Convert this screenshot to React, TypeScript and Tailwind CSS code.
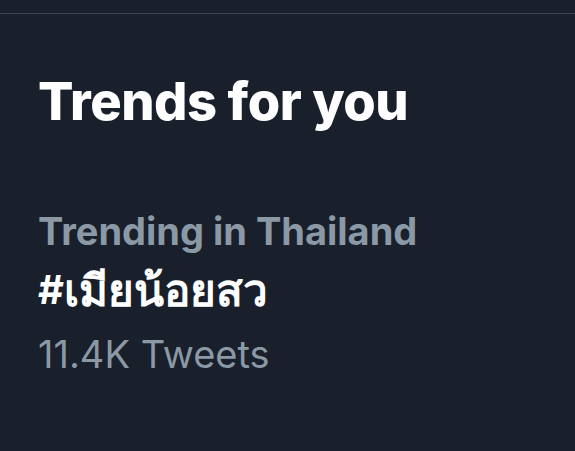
export default function App() {
  return (
    <div className="w-[575px] h-[451px] bg-[#19202b] overflow-hidden" style={{ fontFamily: 'Inter, "Noto Sans", "DejaVu Sans", sans-serif' }}>
      <div className="h-[13px]" />
      <div className="border-t border-[#3a4450] pl-[38px]">
        <h1 className="mt-[57px] text-[52.5px] leading-[60px] font-extrabold text-white tracking-[-0.5px]">Trends for you</h1>
        <div className="mt-[75px] flex flex-col">
          <div className="text-[38px] leading-[50px] font-bold text-[#8b98a5]">Trending in Thailand</div>
          <div className="mt-[3px] h-[62px] flex items-center font-bold text-white leading-none">
            <span className="text-[40px]">#</span>
            <span className="text-[44px]">เมียน้อยสว</span>
          </div>
          <div className="mt-[8px] text-[38px] leading-[50px] font-normal text-[#8b98a5]">11.4K Tweets</div>
        </div>
      </div>
    </div>
  );
}
